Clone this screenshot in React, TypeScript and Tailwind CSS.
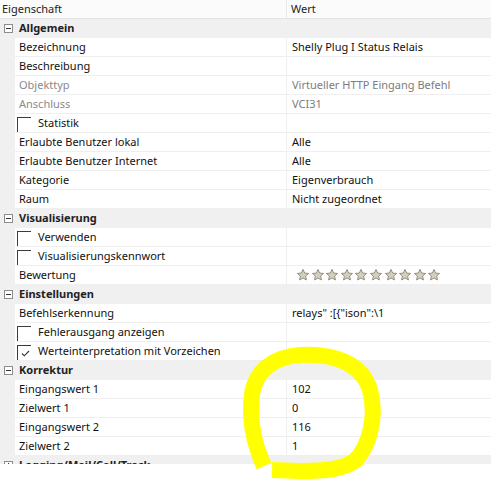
import React from "react";

type Row =
  | { kind: "cat"; label: string }
  | { kind: "prop"; label: string; value?: string; disabled?: boolean; check?: boolean; checked?: boolean; stars?: boolean };

const rows: Row[] = [
  { kind: "cat", label: "Allgemein" },
  { kind: "prop", label: "Bezeichnung", value: "Shelly Plug I Status Relais" },
  { kind: "prop", label: "Beschreibung" },
  { kind: "prop", label: "Objekttyp", value: "Virtueller HTTP Eingang Befehl", disabled: true },
  { kind: "prop", label: "Anschluss", value: "VCI31", disabled: true },
  { kind: "prop", label: "Statistik", check: true },
  { kind: "prop", label: "Erlaubte Benutzer lokal", value: "Alle" },
  { kind: "prop", label: "Erlaubte Benutzer Internet", value: "Alle" },
  { kind: "prop", label: "Kategorie", value: "Eigenverbrauch" },
  { kind: "prop", label: "Raum", value: "Nicht zugeordnet" },
  { kind: "cat", label: "Visualisierung" },
  { kind: "prop", label: "Verwenden", check: true },
  { kind: "prop", label: "Visualisierungskennwort", check: true },
  { kind: "prop", label: "Bewertung", stars: true },
  { kind: "cat", label: "Einstellungen" },
  { kind: "prop", label: "Befehlserkennung", value: 'relays" :[{"ison":\\1' },
  { kind: "prop", label: "Fehlerausgang anzeigen", check: true },
  { kind: "prop", label: "Werteinterpretation mit Vorzeichen", check: true, checked: true },
  { kind: "cat", label: "Korrektur" },
  { kind: "prop", label: "Eingangswert 1", value: "102" },
  { kind: "prop", label: "Zielwert 1", value: "0" },
  { kind: "prop", label: "Eingangswert 2", value: "116" },
  { kind: "prop", label: "Zielwert 2", value: "1" },
  { kind: "cat", label: "Logging/Mail/Call/Track" },
];

function Expander({ open = true }: { open?: boolean }) {
  return (
    <div className="relative w-[9px] h-[9px] border border-[#8c8c8c] bg-white">
      <div className="absolute left-[1px] right-[1px] top-[3px] h-px bg-[#333]" />
      {!open && <div className="absolute top-[1px] bottom-[1px] left-[3px] w-px bg-[#333]" />}
    </div>
  );
}

function Star() {
  return (
    <svg width="14" height="14" viewBox="0 0 24 24">
      <path
        d="M12 2.5l2.9 6.2 6.6.7-5 4.5 1.4 6.6L12 17.2l-5.9 3.3 1.4-6.6-5-4.5 6.6-.7z"
        fill="#d3cfbe"
        stroke="#8e8a7a"
        strokeWidth="1.6"
        strokeLinejoin="round"
      />
    </svg>
  );
}

function CheckBox({ checked }: { checked?: boolean }) {
  return (
    <div className="relative mt-[3px] self-start w-[14px] h-[15px] border-t border-l border-[#3c3c3c] shrink-0">
      {checked && (
        <svg className="absolute left-[3px] top-[4px]" width="9" height="7" viewBox="0 0 9 7">
          <path d="M1 3.5l2.3 2.3L8 1" fill="none" stroke="#333" strokeWidth="1.1" />
        </svg>
      )}
    </div>
  );
}

export default function App() {
  return (
    <div
      className="relative w-[491px] h-[481px] bg-white overflow-hidden text-[11px] text-black"
      style={{ fontFamily: '"Noto Sans", "Open Sans", sans-serif' }}
    >
      <div className="h-[464px] overflow-hidden">
        {/* Kopfzeile */}
        <div className="flex h-[19px] bg-[#fbfbfb] border-b border-[#e3e3e3] text-[#222]">
          <div className="w-[287px] pl-[2px] flex items-center border-r border-[#e8e8e8]">Eigenschaft</div>
          <div className="flex-1 pl-[4px] flex items-center">Wert</div>
        </div>

        {rows.map((row, i) =>
          row.kind === "cat" ? (
            <div key={i} className="flex h-[19px] bg-[#f0f0f0] items-center">
              <div className="w-[15px] flex items-center justify-center pl-[1px]">
                <Expander open={row.label !== "Logging/Mail/Call/Track"} />
              </div>
              <div className="pl-[4px] font-bold text-[#222] whitespace-nowrap">{row.label}</div>
            </div>
          ) : (
            <div key={i} className="flex h-[19px]">
              <div className="w-[15px] bg-[#f0f0f0] shrink-0" />
              <div
                className={`w-[272px] flex items-center overflow-hidden whitespace-nowrap border-b border-r border-[#efefef] ${
                  row.disabled ? "text-[#8a8a8a]" : "text-[#111]"
                } ${row.check ? "pl-[2px]" : "pl-[4px]"}`}
              >
                {row.check && <CheckBox checked={row.checked} />}
                <span className={row.check ? "pl-[7px]" : ""}>{row.label}</span>
              </div>
              <div
                className={`flex-1 flex items-center pl-[5px] whitespace-nowrap border-b border-[#efefef] ${
                  row.disabled ? "text-[#7c7c7c]" : "text-[#111]"
                }`}
              >
                {row.stars ? (
                  <div className="flex gap-[0.6px] pl-[4px]">
                    {Array.from({ length: 10 }).map((_, s) => (
                      <Star key={s} />
                    ))}
                  </div>
                ) : (
                  row.value
                )}
              </div>
            </div>
          )
        )}
      </div>

      {/* Markierung mit Textmarker */}
      <svg className="absolute left-0 top-0 pointer-events-none" width="491" height="481" viewBox="0 0 491 481">
        <path
          d="M264 466 C254 444 249 418 252 394 C256 370 274 357 300 355 C333 353 362 363 370 390 C377 416 370 446 354 462"
          fill="none"
          stroke="#ffff00"
          strokeWidth="16"
          strokeLinejoin="round"
        />
        <path
          d="M358 458 C346 470 322 471 300 471 L272 470"
          fill="none"
          stroke="#ffff00"
          strokeWidth="16"
        />
      </svg>
    </div>
  );
}
